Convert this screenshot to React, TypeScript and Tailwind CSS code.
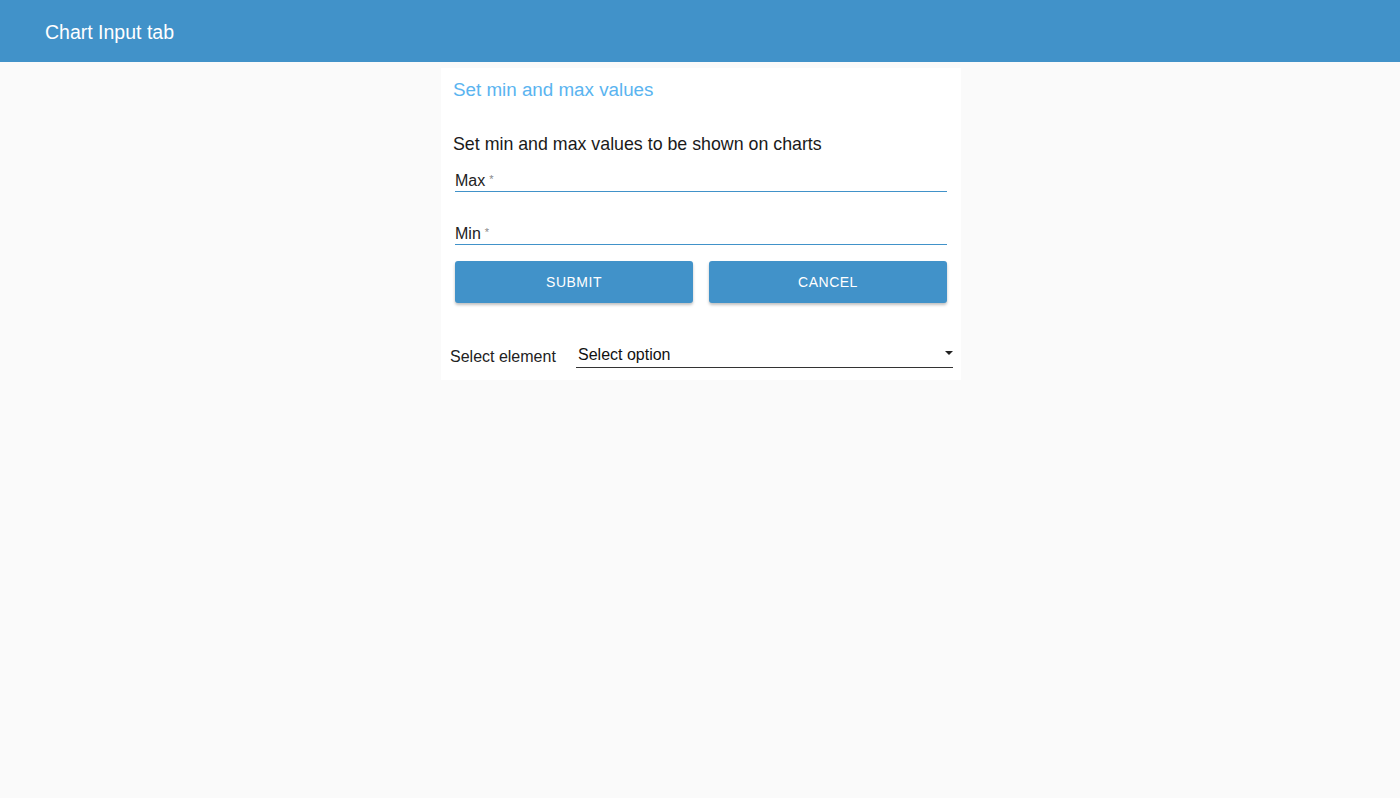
export default function App() {
  return (
    <div className="min-h-[798px] bg-[#fafafa] font-['Liberation_Sans',Arial,sans-serif]">
      <header className="h-[62px] bg-[#4192c9] flex items-center px-[45px] pt-[3px]">
        <h1 className="text-white text-[19.5px] font-normal">Chart Input tab</h1>
      </header>

      <div className="flex justify-center pt-[6px] pl-[2px]">
        <div className="w-[520px] bg-white pb-[12px]">
          <h2 className="text-[#5ab4f0] text-[18.8px] px-[12px] pt-[12px] leading-[20px]">Set min and max values</h2>

          <div className="px-[14px] pt-[33px]">
            <p className="text-[#1a1a1a] text-[17.8px] leading-[22px] -ml-[2px]">Set min and max values to be shown on charts</p>

            <div className="mt-[13px] border-b border-[#4192c9] h-[24px] flex items-end pb-[1px]">
              <span className="text-[16px] text-[#222] leading-[18px]">Max</span>
              <span className="text-[11px] text-[#888] ml-[4px] self-start mt-[3px]">*</span>
            </div>

            <div className="mt-[29px] border-b border-[#4192c9] h-[24px] flex items-end pb-[1px]">
              <span className="text-[16px] text-[#222] leading-[18px]">Min</span>
              <span className="text-[11px] text-[#888] ml-[4px] self-start mt-[3px]">*</span>
            </div>

            <div className="mt-[16px] grid grid-cols-2 gap-[16px]">
              <button className="h-[42px] rounded-[3px] bg-[#4192c9] text-white text-[14px] tracking-[0.5px] shadow-[0_2px_3px_rgba(0,0,0,0.25)]">SUBMIT</button>
              <button className="h-[42px] rounded-[3px] bg-[#4192c9] text-white text-[14px] tracking-[0.5px] shadow-[0_2px_3px_rgba(0,0,0,0.25)]">CANCEL</button>
            </div>
          </div>

          <div className="mt-[37px] flex items-end pl-[9px] pr-[8px]">
            <span className="text-[16px] text-[#222] w-[126px] leading-[20px] mb-[1px]">Select element</span>
            <div className="flex-1 border-b border-[#333] h-[28px] flex items-end justify-between pl-[2px] pr-[0px] pb-[2px]">
              <span className="text-[16px] text-[#111] leading-[20px]">Select option</span>
              <svg width="8" height="5" viewBox="0 0 10 6" className="mb-[9px]"><path d="M0 0h10L5 5z" fill="#222" /></svg>
            </div>
          </div>
        </div>
      </div>
    </div>
  );
}
